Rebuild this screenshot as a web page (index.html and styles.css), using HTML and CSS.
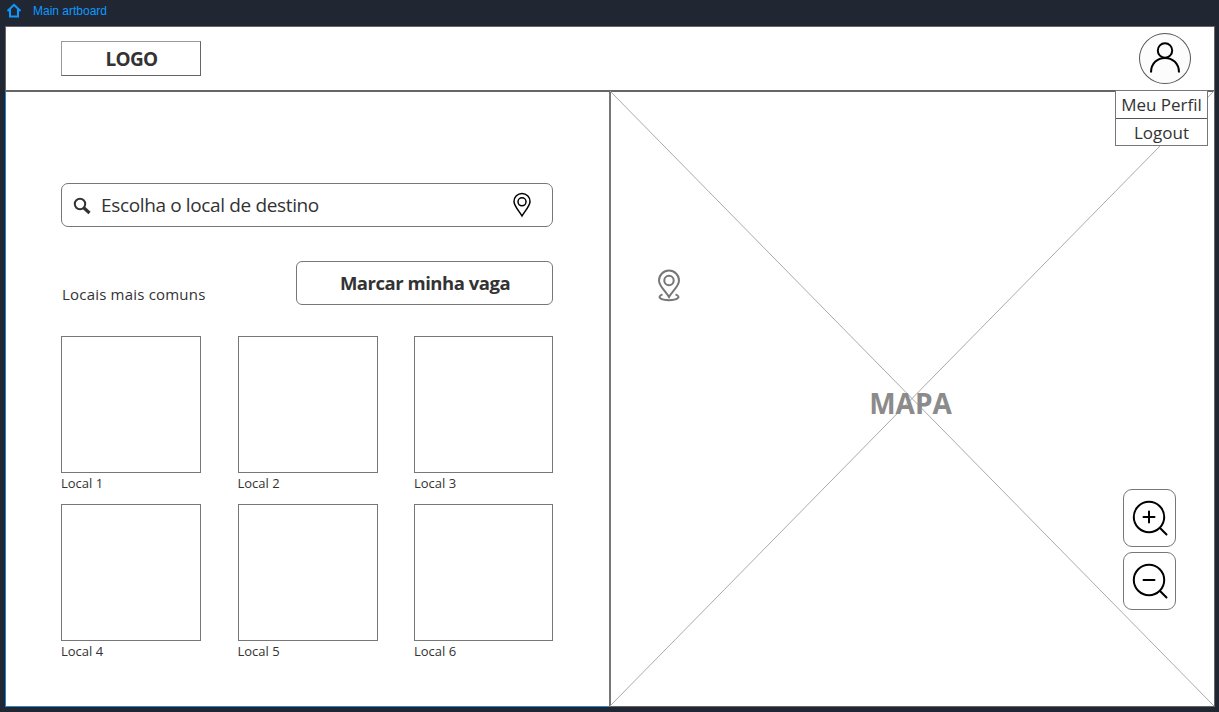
FILE: index.html
```html
<!DOCTYPE html>
<html lang="pt-BR">
<head>
<meta charset="utf-8">
<title>Main artboard</title>
<link rel="stylesheet" href="styles.css">
</head>
<body>
<nav class="crumbs">
  <svg class="home" width="16" height="16" viewBox="0 0 16 16"><path d="M1.500 8 8 1.800 14.500 8M4 6.500V13.600H12V6.500"/></svg>
  <span class="crumb">Main artboard</span>
</nav>
<div class="artboard">
  <header class="header">
    <div class="logo">LOGO</div>
    <div class="avatar"><svg width="52" height="52" viewBox="0 0 52 52"><circle cx="26" cy="17.500" r="7.200"/><path d="M12 39.500C12 20 40 20 40 39.500"/></svg></div>
    <div class="menu"><a class="menu-item">Meu Perfil</a><a class="menu-item logout">Logout</a></div>
  </header>
  <main class="main">
    <section class="panel">
      <div class="search">
        <svg class="lens" width="18" height="18" viewBox="0 0 18 18"><circle cx="7" cy="7" r="5.200"/><path class="handle" d="M11 11 16.500 16"/></svg>
        <span class="placeholder">Escolha o local de destino</span>
        <svg class="pin" width="20" height="26" viewBox="0 0 20 26"><path d="M10 24C7.500 19.500 2 14 2 9.500a8 8 0 0 1 16 0C18 14 12.500 19.500 10 24Z"/><circle cx="10" cy="9.800" r="4"/></svg>
      </div>
      <div class="actions">
        <span class="caption">Locais mais comuns</span>
        <button class="book"><span>Marcar minha vaga</span></button>
      </div>
      <div class="places">
        <div class="place"><div class="thumb"></div><span>Local 1</span></div>
        <div class="place"><div class="thumb"></div><span>Local 2</span></div>
        <div class="place"><div class="thumb"></div><span>Local 3</span></div>
        <div class="place"><div class="thumb"></div><span>Local 4</span></div>
        <div class="place"><div class="thumb"></div><span>Local 5</span></div>
        <div class="place"><div class="thumb"></div><span>Local 6</span></div>
      </div>
    </section>
    <section class="map">
      <svg class="cross" width="604" height="615" viewBox="0 0 604 615"><path d="M0 0 604 615M604 0 0 615"/></svg>
      <span class="map-label">MAPA</span>
      <svg class="marker" width="24" height="34" viewBox="0 0 24 34"><path d="M12 28C9 22.500 2 17.500 2 11.500a10 10 0 0 1 20 0C22 17.500 15 22.500 12 28Z"/><circle cx="12" cy="11.500" r="4.700"/><path d="M5.500 25.300C-1 28 4 31.200 12 31.200S25 28 18.500 25.300"/></svg>
      <div class="zoom">
        <button class="zoom-btn"><svg width="54" height="58" viewBox="0 0 54 58"><circle cx="26" cy="28" r="15.200"/><path d="M37 39 43.500 45.500M20.500 28H31.500M26 22.500V33.500"/></svg></button>
        <button class="zoom-btn"><svg width="54" height="58" viewBox="0 0 54 58"><circle cx="26" cy="28" r="15.200"/><path d="M37 39 43.500 45.500M20.500 28H31.500"/></svg></button>
      </div>
    </section>
  </main>
</div>
</body>
</html>
```
FILE: styles.css
```css
* { box-sizing: border-box; }
body { margin: 0; height: 712px; overflow: hidden; background: #202733; color: #333; font-family: "Open Sans", "Noto Sans", sans-serif; }
svg { display: block; fill: none; flex: none; }
button { padding: 0; background: #fff; color: inherit; font: inherit; }

.crumbs { height: 26px; padding: 3px 0 0 6px; display: flex; }
.home { stroke: #0d99ff; stroke-width: 2; }
.crumb { margin-left: 11px; font: 12px/16px "Liberation Sans", Arial, sans-serif; color: #0d99ff; }

.artboard { width: 1210px; height: 681px; margin-left: 5px; background: #fff; border: 1px solid #666; }
.header { position: relative; height: 65px; padding: 6px 23px 0 55px; display: flex; justify-content: space-between; border-bottom: 2px solid #666; }
.logo { width: 140px; height: 35px; margin-top: 8px; border: 1px solid #666; border-top-color: #999; border-left-color: #999; text-align: center; font-size: 19px; line-height: 34px; font-weight: 700; letter-spacing: -0.7px; padding-left: 1px; }
.avatar { width: 52px; height: 51px; border: 1px solid #555; border-radius: 50%; background: #fcfcfc; display: flex; align-items: center; justify-content: center; }
.avatar svg { stroke: #000; stroke-width: 2; }
.menu { position: absolute; z-index: 2; top: 63px; right: 6px; width: 93px; background: #fff; border: 1px solid #777; }
.menu-item { display: block; height: 27px; line-height: 27px; text-align: center; font-size: 17px; }
.logout { border-top: 1px solid #555; }

.main { display: flex; height: 615px; }
.panel { width: 604px; margin-left: -1px; padding: 91px 56px 0 55px; border-left: 1px solid #1688d8; border-bottom: 1px solid #2e88c5; }
.search { width: 492px; height: 44px; padding: 0 20px 0 11px; display: flex; align-items: center; border: 1px solid #777; border-radius: 7px; }
.lens { margin-top: 2px; stroke: #333; stroke-width: 2; }
.handle { stroke-width: 3.200; }
.placeholder { margin-left: 10px; flex: 1; font-size: 19px; letter-spacing: -0.36px; }
.pin { stroke: #000; stroke-width: 1.500; }
.actions { width: 492px; height: 44px; margin-top: 34px; display: flex; justify-content: space-between; }
.caption { margin-top: 22px; font-size: 15px; line-height: 22px; letter-spacing: 0.2px; padding-left: 1px; }
.book { width: 257px; height: 44px; padding: 0 0 2px 1px; border: 1px solid #777; border-radius: 6px; font-size: 18.5px; font-weight: 700; letter-spacing: -0.48px; }
.places { width: 492px; margin-top: 31px; display: grid; grid-template-columns: 140px 140px 139px; justify-content: space-between; grid-auto-rows: 168px; }
.place { font-size: 13px; line-height: 20px; }
.thumb { height: 137px; border: 1px solid #777; }

.map { position: relative; flex: 1; border-left: 2px solid #777; }
.cross { margin: -1px 0 0 -1px; stroke: #aaa; stroke-width: 1; }
.map-label { position: absolute; left: 0; right: 4px; top: 291px; text-align: center; font-size: 28px; line-height: 40px; font-weight: 700; color: #8b8b8b; }
.marker { position: absolute; left: 46px; top: 177px; stroke: #777; stroke-width: 2; }
.zoom { position: absolute; left: 512px; top: 397px; display: grid; gap: 5px; }
.zoom-btn { width: 53px; height: 58px; border: 1px solid #777; border-radius: 9px; display: flex; align-items: center; justify-content: center; }
.zoom-btn svg { stroke: #000; stroke-width: 2; stroke-linecap: round; }
```
